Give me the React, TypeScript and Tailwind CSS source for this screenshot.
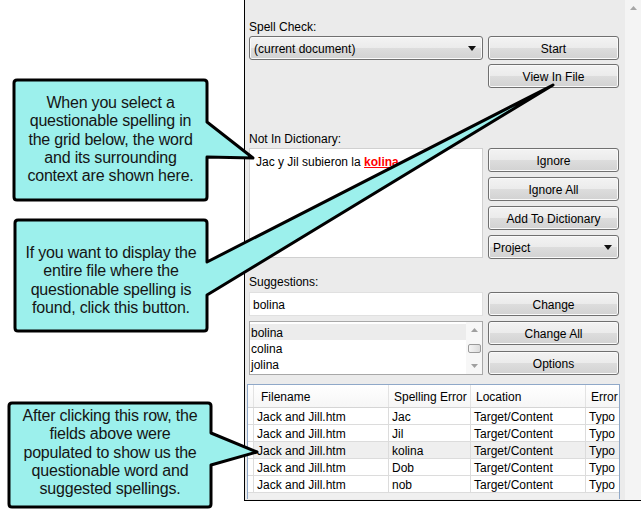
import type { ReactNode } from 'react'

const btnCls =
  'h-[24px] flex items-center pt-[1px] rounded-[3px] border border-[#707070] bg-[linear-gradient(#f3f3f3_0%,#ebebeb_50%,#dddddd_50%,#d2d2d2_100%)] shadow-[inset_0_0_0_1px_#fafafa] text-[12px] text-black'

function Btn({ children }: { children: ReactNode }) {
  return <div className={`${btnCls} justify-center`}>{children}</div>
}

function Combo({ label }: { label: string }) {
  return (
    <div className={`${btnCls} justify-between pl-[4px] pr-[6px]`}>
      <span>{label}</span>
      <svg width="8" height="5" viewBox="0 0 8 5">
        <path d="M0 0H8L4 5Z" fill="#111" />
      </svg>
    </div>
  )
}

const rows = [
  { file: 'Jack and Jill.htm', err: 'Jac' },
  { file: 'Jack and Jill.htm', err: 'Jil' },
  { file: 'Jack and Jill.htm', err: 'kolina', sel: true },
  { file: 'Jack and Jill.htm', err: 'Dob' },
  { file: 'Jack and Jill.htm', err: 'nob' },
]

const cols = 'grid grid-cols-[6px_135px_82px_115px_33px]'
const cell = 'border-r border-[#dcdcdc] pl-[3px] overflow-hidden whitespace-nowrap'

function ResultsGrid() {
  return (
    <div className="ml-[-2px] w-[373px] h-[115px] border-l border-t border-r border-[#8fa8c8] bg-[#f0f0f0] overflow-hidden text-[12px] text-black">
      {/* header */}
      <div className={`${cols} h-[23px] leading-[25px] bg-[linear-gradient(#ffffff,#f6f6f6)] border-b border-[#d5d5d5]`}>
        <div className="border-r border-[#e3e3e3]" />
        <div className={`${cell} pl-[7px] border-[#e3e3e3]`}>Filename</div>
        <div className={`${cell} pl-[5px] border-[#e3e3e3]`}>Spelling Error</div>
        <div className={`${cell} pl-[5px] border-[#e3e3e3]`}>Location</div>
        <div className={`${cell} pl-[5px] border-r-0`}>Error</div>
      </div>
      {rows.map((r, i) => (
        <div
          key={i}
          className={`${cols} h-[17px] leading-[19px] border-b border-[#dcdcdc] ${r.sel ? 'bg-[#efefef]' : 'bg-white'}`}
        >
          <div className="border-r border-[#dcdcdc] bg-white" />
          <div className={cell}>{r.file}</div>
          <div className={cell}>{r.err}</div>
          <div className={cell}>Target/Content</div>
          <div className={`${cell} pl-[2px] border-r-0`}>Typo</div>
        </div>
      ))}
    </div>
  )
}

function Panel() {
  return (
    <div className="flex w-[397px] h-[501px] border-l border-b border-black bg-[#ebebeb] font-['Liberation_Sans',Arial,sans-serif] text-[12px] text-black">
      <div className="w-[380px] pl-[4px] pt-[19px] flex flex-col">
        <div className="h-[16px] leading-[17px]">Spell Check:</div>
        <div className="mt-[1px] grid grid-cols-[234px_131px] gap-x-[5px] gap-y-[4px]">
          <Combo label="(current document)" />
          <Btn>Start</Btn>
          <div />
          <Btn>View In File</Btn>
        </div>

        <div className="mt-[43px] h-[16px] leading-[17px]">Not In Dictionary:</div>
        <div className="mt-[1px] grid grid-cols-[234px_131px] gap-x-[5px]">
          <div className="h-[110px] bg-white border border-[#d0d0d0] pl-[6px] pt-[5px] leading-[16px]">
            Jac y Jil subieron la{' '}
            <span className="font-bold text-[#ff0000] underline">kolina</span>
          </div>
          <div className="flex flex-col gap-[5px]">
            <Btn>Ignore</Btn>
            <Btn>Ignore All</Btn>
            <Btn>Add To Dictionary</Btn>
            <Combo label="Project" />
          </div>
        </div>

        <div className="mt-[15px] h-[16px] leading-[17px]">Suggestions:</div>
        <div className="mt-[2px] grid grid-cols-[234px_131px] gap-x-[5px] gap-y-[5px]">
          <div className="h-[24px] bg-white border border-[#e0e0e0] pl-[3px] leading-[24px]">bolina</div>
          <Btn>Change</Btn>
          <div className="h-[54px] bg-white border border-[#a8a8a8] flex">
            <div className="flex-1 pt-[2px]">
              <div className="h-[16px] leading-[19px] pl-[1px] bg-[#ececec]">bolina</div>
              <div className="h-[16px] leading-[19px] pl-[1px]">colina</div>
              <div className="h-[16px] leading-[19px] pl-[1px]">jolina</div>
            </div>
            <div className="w-[16px] bg-[#f7f7f7] flex flex-col items-center justify-between py-[6px]">
              <svg width="7" height="4" viewBox="0 0 7 4">
                <path d="M0 4L3.5 0L7 4Z" fill="#a0a0a0" />
              </svg>
              <div className="w-[13px] h-[9px] rounded-[2px] border border-[#9a9a9a] bg-[linear-gradient(90deg,#f4f4f4,#dcdcdc)]" />
              <svg width="7" height="4" viewBox="0 0 7 4">
                <path d="M0 0L3.5 4L7 0Z" fill="#a0a0a0" />
              </svg>
            </div>
          </div>
          <div className="flex flex-col gap-[6px]">
            <Btn>Change All</Btn>
            <Btn>Options</Btn>
          </div>
        </div>

        <div className="mt-[9px]">
          <ResultsGrid />
        </div>
      </div>
      <div className="w-[16px] bg-[#f4f4f4] flex justify-center pt-[6px]">
        <svg width="7" height="4" viewBox="0 0 7 4">
          <path d="M0 4L3.5 0L7 4Z" fill="#a6a6a6" />
        </svg>
      </div>
    </div>
  )
}

const calloutText =
  "absolute text-center text-[16px] leading-[18.3px] text-[#151515] font-['Liberation_Sans',Arial,sans-serif] tracking-[-0.2px]"

function Callouts() {
  return (
    <>
      <svg className="absolute left-0 top-0 pointer-events-none" width="641" height="518" viewBox="0 0 641 518">
        <g fill="#9cf0ec" stroke="#000" strokeWidth="3" strokeLinejoin="round">
          <path d="M17 80H204Q207 80 207 83V122L253 158L207 157V197Q207 200 204 200H17Q14 200 14 197V83Q14 80 17 80Z" />
          <path d="M18 220H204Q207 220 207 223V262L553 85L207 295V328Q207 331 204 331H18Q15 331 15 328V223Q15 220 18 220Z" />
          <path d="M12 403H208Q211 403 211 406V433L257 452L211 465V504Q211 507 208 507H12Q9 507 9 504V406Q9 403 12 403Z" />
        </g>
      </svg>
      <div className={`${calloutText} left-[14px] top-[94px] w-[193px]`}>
        When you select a<br />questionable spelling in<br />the grid below, the word<br />and its surrounding<br />context are shown here.
      </div>
      <div className={`${calloutText} left-[15px] top-[244px] w-[192px]`}>
        If you want to display the<br />entire file where the<br />questionable spelling is<br />found, click this button.
      </div>
      <div className={`${calloutText} left-[9px] top-[407px] w-[202px]`}>
        After clicking this row, the<br />fields above were<br />populated to show us the<br />questionable word and<br />suggested spellings.
      </div>
    </>
  )
}

export default function App() {
  return (
    <div className="relative w-[641px] h-[518px] bg-white overflow-hidden">
      <div className="flex">
        <div className="w-[244px] shrink-0" />
        <Panel />
      </div>
      <Callouts />
    </div>
  )
}
